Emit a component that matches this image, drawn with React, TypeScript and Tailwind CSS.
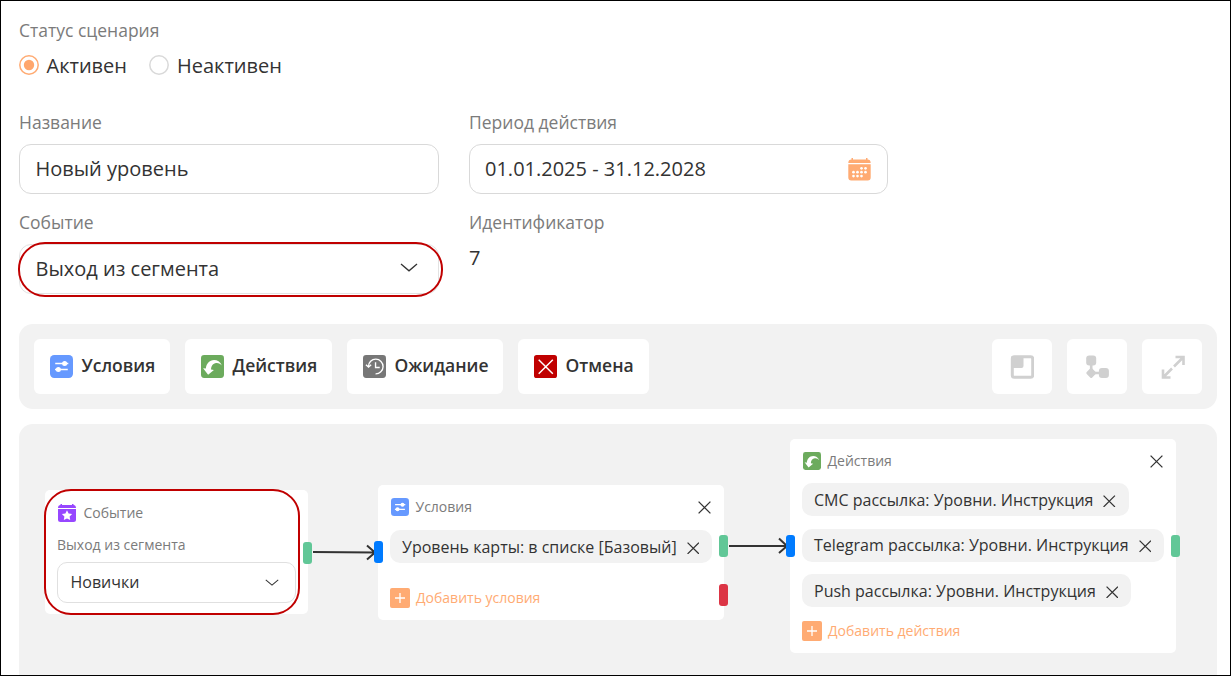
import { useState, type ReactNode } from "react";

type IconProps = { className?: string };

const ConditionsIcon = ({ className }: IconProps) => (
  <svg viewBox="0 0 22 22" className={className} fill="none">
    <rect width="22" height="22" rx="4" fill="#6699ff" />
    <path d="M5 8.200h12.500M4.800 13.800h12.200" stroke="#fff" strokeWidth="1.500" />
    <circle cx="14" cy="8.200" r="2.400" fill="#fff" />
    <circle cx="8" cy="13.800" r="2.400" fill="#fff" />
  </svg>
);

const ActionsIcon = ({ className }: IconProps) => (
  <svg viewBox="0 0 22 22" className={className}>
    <rect width="22" height="22" rx="3" fill="#6cab5d" />
    <path
      d="M20 10C18.500 6.500 15.500 4.800 12.500 4.800C8 4.800 5.200 8.200 4.600 13L2 12.600L6.800 18.800L12.400 14.400L9.600 13.800C9.700 10.500 11.500 8 14.500 7.700C16.800 7.500 18.600 8.500 20 10Z"
      fill="#fff"
    />
  </svg>
);

const WaitIcon = ({ className }: IconProps) => (
  <svg viewBox="0 0 22 22" className={className} fill="none" stroke="#fff">
    <rect width="22" height="22" rx="3" fill="#777" stroke="none" />
    <path d="M5.200 11A7 7 0 1 1 12 18" strokeWidth="1.300" />
    <path d="M2.800 9.300L5.300 11.500L7.800 9.300" strokeWidth="1.300" />
    <path d="M12 7V12H16" strokeWidth="1.300" />
  </svg>
);

const CancelIcon = ({ className }: IconProps) => (
  <svg viewBox="0 0 22 22" className={className} fill="none">
    <rect width="22" height="22" rx="2.500" fill="#c00000" />
    <path d="M4.500 4.500L18 18M18 4.500L4.500 18" stroke="#fff" strokeWidth="1.400" />
  </svg>
);

const CalendarIcon = ({ className }: IconProps) => (
  <svg viewBox="0 0 23 23" className={className} fill="#ffab73">
    <path d="M3.500 0h1.500v1.500h13V0h1.500v1.500c2 0 3.200 1 3.200 3.500H.3c0-2.500 1.200-3.500 3.200-3.500z" />
    <path d="M.3 6.200h22.400V19.500a3 3 0 0 1-3 3H3.300a3 3 0 0 1-3-3z" />
    <g fill="#fff">
      {[13.5, 17.5].map((x) => (
        <circle key={x} cx={x} cy="10.300" r="1.350" />
      ))}
      {[5.5, 9.5, 13.5, 17.5].map((x) => (
        <circle key={x} cx={x} cy="14.200" r="1.350" />
      ))}
      {[5.5, 9.5, 13.5].map((x) => (
        <circle key={x} cx={x} cy="18.100" r="1.350" />
      ))}
    </g>
  </svg>
);

const EventIcon = ({ className }: IconProps) => (
  <svg viewBox="0 0 18 18" className={className} fill="#9747ff">
    <path d="M2.500 0h1.500v1h10V0h1.500v1C17 1 18 2.200 18 4.100H0C0 2.200 1 1 2.500 1z" />
    <path d="M0 4.900h18V15.500a2.500 2.500 0 0 1-2.500 2.500h-13A2.500 2.500 0 0 1 0 15.500z" />
    <path
      d="M9 6.300l1.600 3.200 3.500.5-2.500 2.500.6 3.500L9 14.400l-3.200 1.600.6-3.500L3.900 10l3.500-.5z"
      fill="#fff"
    />
  </svg>
);

const Chevron = ({ className }: IconProps) => (
  <svg viewBox="0 0 18 9" className={className} fill="none">
    <path d="M1 1l8 6.800 8-6.800" stroke="#333" strokeWidth="1.300" />
  </svg>
);

const Cross = ({ className }: IconProps) => (
  <svg viewBox="0 0 13 13" className={className} fill="none">
    <path d="M.6.6l11.800 11.800M12.400.6L.6 12.400" stroke="#333" strokeWidth="1.300" />
  </svg>
);

const Label = ({ children }: { children: ReactNode }) => (
  <div className="h-6 text-[17.500px] leading-6 text-[#7b7b7b]">{children}</div>
);

type RadioProps = { checked: boolean; label: string; onClick: () => void };

const Radio = ({ checked, label, onClick }: RadioProps) => (
  <button type="button" onClick={onClick} className="flex items-center gap-[7.500px]">
    <svg viewBox="0 0 20 20" className="size-5" fill="none">
      <circle cx="10" cy="10" r="9.200" stroke={checked ? "#ffab73" : "#d9d9d9"} strokeWidth="1.500" />
      {checked && <circle cx="10" cy="10" r="5.200" fill="#ffa66c" />}
    </svg>
    <span className="pt-0.5 text-[20px] leading-7">{label}</span>
  </button>
);

const tools = [
  { label: "Условия", Icon: ConditionsIcon, width: "w-[136px]" },
  { label: "Действия", Icon: ActionsIcon, width: "w-[147px]" },
  { label: "Ожидание", Icon: WaitIcon, width: "w-[156px]" },
  { label: "Отмена", Icon: CancelIcon, width: "w-[131px]" },
];

const views = [
  <svg key="map" viewBox="0 0 24 24" className="size-6" fill="#d0d0d0">
    <rect x="2.300" y="1.800" width="20.400" height="20.400" rx="2" fill="none" stroke="#d0d0d0" strokeWidth="3" />
    <path d="M1.500 1h12v10a2 2 0 0 1-2 2h-10z" />
  </svg>,
  <svg key="tree" viewBox="0 0 24 24" className="size-6" fill="#d0d0d0">
    <rect x="1.200" y=".5" width="10" height="10" rx="3" />
    <rect x="13.900" y="13" width="10" height="10" rx="3" />
    <rect x="2.300" y="14.100" width="7.800" height="7.800" rx="1.500" transform="rotate(45 6.200 18)" />
    <path d="M4.900 9h2.600v6H4.900zM9 16.700h6v2.600H9z" />
  </svg>,
  <svg key="full" viewBox="0 0 24 24" className="mt-px ml-[2px] size-6" fill="none" stroke="#d0d0d0" strokeWidth="2.600">
    <path d="M14.500 2h8v8M22 2.500L13 11.500M9.500 22.500H2v-8M2.500 22l8.500-8.500" />
  </svg>,
];

const Chip = ({ children }: { children: ReactNode }) => (
  <div className="flex h-[33px] w-fit items-center gap-[10px] rounded-[10px] bg-[#f2f2f2] pr-[13px] pl-3">
    <span className="text-[16px] leading-6">{children}</span>
    <Cross className="mt-[3px] size-[12.500px]" />
  </div>
);

const AddButton = ({ children }: { children: ReactNode }) => (
  <button type="button" className="flex h-5 items-center gap-[6px] text-[14px] leading-5 text-[#ffab73]">
    <svg viewBox="0 0 20 20" className="size-5">
      <rect width="20" height="20" rx="2" fill="#ffab73" />
      <path d="M10 5v10M5 10h10" stroke="#fff" strokeWidth="1.300" />
    </svg>
    {children}
  </button>
);

const NodeHead = ({ icon, title }: { icon: ReactNode; title: string }) => (
  <div className="flex h-[18px] items-center gap-[7px] pl-[0.500px] text-[14px] text-[#7b7b7b]">
    {icon}
    <span className="pb-px">{title}</span>
    <Cross className="mr-[1px] ml-auto size-[13px]" />
  </div>
);

const Port = ({ className }: { className: string }) => (
  <span className={`absolute h-[22px] w-[9px] rounded-[3px] ${className}`} />
);

const App = () => {
  const [active, setActive] = useState(true);

  return (
    <div className="h-[676px] w-[1231px] overflow-hidden border border-black bg-white font-['Open_Sans','Noto_Sans',sans-serif] whitespace-nowrap text-[#333]">
      <div className="pt-[17px] pl-[18px]">
        <Label>Статус сценария</Label>
        <div className="mt-[9px] flex h-7 items-center gap-[22.500px]">
          <Radio checked={active} label="Активен" onClick={() => setActive(true)} />
          <Radio checked={!active} label="Неактивен" onClick={() => setActive(false)} />
        </div>

        <div className="mt-[31px] flex gap-[30px]">
          <div className="w-[420px]">
            <Label>Название</Label>
            <div className="mt-[10px] flex h-[50px] items-center rounded-[12px] border border-[#d9d9d9] px-[15.500px] text-[20px]">
              Новый уровень
            </div>
          </div>
          <div className="w-[419px]">
            <Label>Период действия</Label>
            <div className="mt-[10px] flex h-[50px] items-center justify-between rounded-[12px] border border-[#d9d9d9] pr-4 pl-[15px] text-[20px]">
              01.01.2025 - 31.12.2028
              <CalendarIcon className="size-[23px]" />
            </div>
          </div>
        </div>

        <div className="mt-4 flex gap-[30px]">
          <div className="w-[420px]">
            <Label>Событие</Label>
            <div className="relative mt-[10px] flex h-[50px] items-center justify-between rounded-[12px] border border-[#e2e2e2] pr-5 pl-[15.500px] text-[20px]">
              Выход из сегмента
              <Chevron className="mb-[3px] h-[9px] w-[18px]" />
              <span className="absolute -top-[3px] -right-[5px] -bottom-1 -left-[2px] rounded-[27px] border-2 border-[#c00000]" />
            </div>
          </div>
          <div>
            <Label>Идентификатор</Label>
            <div className="mt-[10px] text-[20px] leading-7">7</div>
          </div>
        </div>
      </div>

      {/* Toolbar */}
      <div className="mt-[30px] ml-[18px] flex h-[85px] w-[1198px] items-center justify-between rounded-[14px] bg-[#f2f2f2] px-[15px]">
        <div className="flex gap-[15px]">
          {tools.map(({ label, Icon, width }) => (
            <button
              key={label}
              type="button"
              className={`flex h-[55px] items-center gap-[8.500px] rounded-[6px] bg-white pl-4 text-[17.500px] font-semibold ${width}`}
            >
              <Icon className="size-[23px] shrink-0" />
              <span className="pb-0.5">{label}</span>
            </button>
          ))}
        </div>
        <div className="flex gap-[15px]">
          {views.map((icon, i) => (
            <button key={i} type="button" className="flex h-[55px] w-[60px] items-center justify-center rounded-[6px] bg-white">
              {icon}
            </button>
          ))}
        </div>
      </div>

      {/* Scenario canvas */}
      <div className="relative mt-[15px] ml-[18px] h-[252px] w-[1198px] rounded-t-[14px] bg-[#f2f2f2]">
        <div className="absolute top-[66px] left-[26px] h-[124px] w-[263px] rounded-[5px] bg-white pt-[14px] pl-[13px]">
          <div className="flex h-[18px] items-center gap-[7.500px] text-[14px] text-[#7b7b7b]">
            <EventIcon className="size-[18px]" />
            <span className="pb-0.5">Событие</span>
          </div>
          <div className="mt-[13px] -ml-px text-[14px] leading-5 text-[#7b7b7b]">Выход из сегмента</div>
          <div className="mt-[7px] -ml-px flex h-[41px] w-[239px] items-center justify-between rounded-[10px] border border-[#e0e0e0] pr-4 pl-[12.500px] text-[16px]">
            <span className="pb-0.5">Новички</span>
            <Chevron className="mb-px h-[7px] w-[14px]" />
          </div>
        </div>
        <span className="absolute top-[65px] left-[24.500px] h-[126px] w-[256px] rounded-[27px] border-2 border-[#c00000]" />

        <div className="absolute top-[61px] left-[359px] h-[135px] w-[346px] rounded-[5px] bg-white px-3 pt-[13px]">
          <NodeHead icon={<ConditionsIcon className="size-[18px]" />} title="Условия" />
          <div className="mt-[14px]">
            <Chip>Уровень карты: в списке [Базовый]</Chip>
          </div>
          <div className="mt-[25px]">
            <AddButton>Добавить условия</AddButton>
          </div>
        </div>

        <div className="absolute top-[15px] left-[771px] h-[214px] w-[386px] rounded-[5px] bg-white px-3 pt-[13px]">
          <NodeHead icon={<ActionsIcon className="size-[18px]" />} title="Действия" />
          <div className="mt-[13px] flex flex-col gap-[12.500px]">
            <Chip>СМС рассылка: Уровни. Инструкция</Chip>
            <Chip>Telegram рассылка: Уровни. Инструкция</Chip>
            <Chip>Push рассылка: Уровни. Инструкция</Chip>
          </div>
          <div className="mt-[14px]">
            <AddButton>Добавить действия</AddButton>
          </div>
        </div>

        {/* Links between nodes */}
        <svg className="absolute inset-0" width="1198" height="252" fill="none" stroke="#333" strokeWidth="2">
          <path d="M294 128L356 128.500M348 121.500l8 7-8 7" />
          <path d="M710 122H768M760 114.500l8 7.500-8 7" />
        </svg>

        <Port className="top-[117.500px] left-[284px] bg-[#61c797]" />
        <Port className="top-[117px] left-[354.500px] bg-[#007bff]" />
        <Port className="top-[111px] left-[700.400px] bg-[#61c797]" />
        <Port className="top-[160px] left-[700.400px] bg-[#dc3545]" />
        <Port className="top-[111px] left-[767px] bg-[#007bff]" />
        <Port className="top-[111px] left-[1152px] bg-[#61c797]" />
      </div>
    </div>
  );
};

export default App;
